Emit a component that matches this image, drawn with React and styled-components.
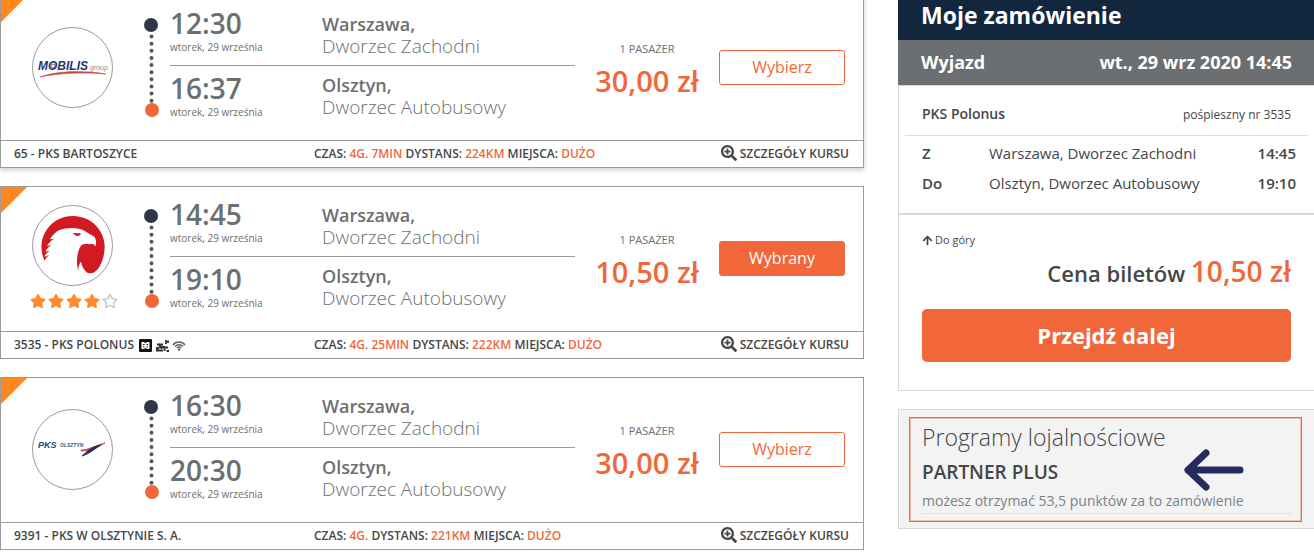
import React, { useState } from 'react';
import styled, { createGlobalStyle, ThemeProvider } from 'styled-components';
import { FaArrowUp, FaRegStar, FaSearchPlus, FaStar } from 'react-icons/fa';

const theme = {
  orange: '#f26739',
  corner: '#ff871f',
  star: '#ff8a2b',
  navy: '#12273e',
  grey: '#6b6f71',
  dark: '#444648',
  border: '#999b9c',
  lightBorder: '#d8d8d8',
};

const courses = [
  {
    id: '65',
    carrier: 'PKS BARTOSZYCE',
    logo: MobilisLogo,
    departure: '12:30',
    arrival: '16:37',
    price: '30,00 zł',
    time: '4G. 7MIN',
    distance: '224KM',
    raised: true,
  },
  {
    id: '3535',
    carrier: 'PKS POLONUS',
    logo: PolonusLogo,
    rating: 4,
    amenities: true,
    departure: '14:45',
    arrival: '19:10',
    price: '10,50 zł',
    time: '4G. 25MIN',
    distance: '222KM',
  },
  {
    id: '9391',
    carrier: 'PKS W OLSZTYNIE S. A.',
    logo: OlsztynLogo,
    departure: '16:30',
    arrival: '20:30',
    price: '30,00 zł',
    time: '4G.',
    distance: '221KM',
  },
];

function MobilisLogo() {
  return (
    <svg width="79" height="79" viewBox="1 1 79 79" role="img" aria-label="Mobilis group">
      <text x="6" y="43" fontFamily="Liberation Sans, sans-serif" fontSize="12" fontWeight="bold" fontStyle="italic" fill="#23386e">MOBILIS</text>
      <circle cx="21" cy="39" r="2" fill="none" stroke="#b03a55" strokeWidth="1" />
      <text x="58" y="43" fontFamily="Liberation Sans, sans-serif" fontSize="7" fontStyle="italic" fill="#8b8fa3">group</text>
      <path d="M8 50C25 44 50 43 74 47C50 45 28 46 8 50Z" fill="#c4473f" stroke="#c4574f" strokeWidth=".6" />
    </svg>
  );
}

function PolonusLogo() {
  return (
    <svg width="79" height="79" viewBox="3 3 237 237" role="img" aria-label="Polonus">
      <path
        fill="#d21a22"
        d="M38 168C25 142 25 110 38 85C55 50 88 33 123 33C176 33 218 75 218 125C218 162 200 205 175 205C163 205 152 192 147 170C140 178 139 188 139 197C132 175 134 145 145 125C152 113 166 119 180 117C186 117 189 121 190 125C194 112 192 98 184 93C170 86 160 77 145 72C122 66 100 69 82 75C72 80 61 90 54 103L66 101C57 107 50 114 45 123L58 120C50 126 44 132 40 140L53 137C46 142 40 148 37 155L52 150C45 155 40 161 38 168Z"
      />
      <path fill="#d21a22" d="M121 84L147 85C145 92 139 95 132 92Z" />
    </svg>
  );
}

function OlsztynLogo() {
  return (
    <svg width="79" height="79" viewBox="1 1 79 79" role="img" aria-label="PKS Olsztyn">
      <text x="6" y="39" fontFamily="Liberation Sans, sans-serif" fontSize="9" fontWeight="bold" fontStyle="italic" fill="#174a78">PKS</text>
      <text x="28" y="38" fontFamily="Liberation Sans, sans-serif" fontSize="5" fontWeight="bold" fontStyle="italic" fill="#315b85">OLSZTYN</text>
      <path d="M49 41C57 41 64 36 73 34C65 38 60 42 49 42Z" fill="#c8564f" stroke="#c8564f" />
      <path d="M50 47C55 43 58 38 69 36C62 40 59 44 50 47Z" fill="#252f60" stroke="#252f60" />
    </svg>
  );
}

function RouteLine() {
  return (
    <svg width="16" height="100" aria-hidden="true">
      <path d="M8.500 19.500V85" stroke="#555" strokeWidth="4" strokeLinecap="round" strokeDasharray="0 7.130" />
      <circle cx="8" cy="8" r="7" fill="#30364a" />
      <circle cx="9" cy="93" r="7" fill="#f26739" />
    </svg>
  );
}

function Amenities() {
  return (
    <AmenityList>
      <svg width="13" height="13" role="img" aria-label="Gniazdko">
        <rect width="13" height="13" rx="1" fill="#111" />
        <path d="M2.500 3H5L6.500 4.200L8 3H10.500V10H8L6.500 9L5 10H2.500Z" fill="#fff" />
        <path d="M4 5H5.500V6H4ZM7.500 5H9V6H7.500ZM4 7.500H5.500V8.500H4ZM7.500 7.500H9V8.500H7.500Z" fill="#111" />
      </svg>
      <svg width="14" height="13" role="img" aria-label="Wygodne fotele">
        <path d="M2 5.500H8M1 11.500H8M4 8H10M11 1V5M13 1.500V4M13 8.500H9.500V12M11.500 12H14" fill="none" stroke="#333" strokeWidth="1.800" />
        <path d="M4 5L7 10" stroke="#333" strokeWidth="2" />
        <circle cx="2.500" cy="9.500" r="1.800" fill="#333" />
      </svg>
      <svg width="14" height="13" role="img" aria-label="Wi-Fi">
        <path d="M1 6C4 2 10 2 13 6M3 7.500C5 5 9 5 11 7.500M5 9C6 7.800 8 7.800 9 9" fill="none" stroke="#666" strokeWidth="1.500" />
        <circle cx="7" cy="10.500" r="1.200" fill="#666" />
      </svg>
    </AmenityList>
  );
}

function Course({ course, selected, onSelect }) {
  const Logo = course.logo;

  return (
    <Card $raised={course.raised}>
      <CardBody>
        <Carrier>
          <LogoCircle><Logo /></LogoCircle>
          {
            course.rating ?
              <Rating role="img" aria-label={`Ocena ${course.rating} na 5`}>
                {[1, 2, 3, 4, 5].map(n => (
                  n <= course.rating ? <FaStar key={n} /> : <FaRegStar key={n} color="#c4c4c4" />
                ))}
              </Rating> : null
          }
        </Carrier>
        <RouteLine />
        <Itinerary>
          <Stop>
            <div>
              <Time>{course.departure}</Time>
              <StopDate>wtorek, 29 września</StopDate>
            </div>
            <Station><b>Warszawa,</b>Dworzec Zachodni</Station>
          </Stop>
          <Stop>
            <div>
              <Time>{course.arrival}</Time>
              <StopDate>wtorek, 29 września</StopDate>
            </div>
            <Station><b>Olsztyn,</b>Dworzec Autobusowy</Station>
          </Stop>
        </Itinerary>
        <Fare>
          <Passengers>1 PASAŻER</Passengers>
          <Price>{course.price}</Price>
        </Fare>
        <SelectButton type="button" $selected={selected} onClick={() => onSelect(course.id)}>
          {selected ? 'Wybrany' : 'Wybierz'}
        </SelectButton>
      </CardBody>
      <CardFooter>
        <Line>{course.id} - {course.carrier}{course.amenities ? <Amenities /> : null}</Line>
        <span>
          CZAS: <em>{course.time}</em> DYSTANS: <em>{course.distance}</em> MIEJSCA: <em>DUŻO</em>
        </span>
        <Details href="#"><FaSearchPlus size={16} />SZCZEGÓŁY KURSU</Details>
      </CardFooter>
    </Card>
  );
}

function App() {
  const [selectedId, setSelectedId] = useState('3535');

  return (
    <ThemeProvider theme={theme}>
      <GlobalStyle />
      <Page>
        <Results>
          {courses.map(course => (
            <Course
              key={course.id}
              course={course}
              selected={course.id === selectedId}
              onSelect={setSelectedId}
            />
          ))}
        </Results>
        <Sidebar>
          <SidebarTitle>Moje zamówienie</SidebarTitle>
          <Departure><span>Wyjazd</span><span>wt., 29 wrz 2020 14:45</span></Departure>
          <OrderBox>
            <OrderCarrier><b>PKS Polonus</b><small>pośpieszny nr 3535</small></OrderCarrier>
            <StopsTable>
              <tbody>
                <tr><th scope="row">Z</th><td>Warszawa, Dworzec Zachodni</td><td>14:45</td></tr>
                <tr><th scope="row">Do</th><td>Olsztyn, Dworzec Autobusowy</td><td>19:10</td></tr>
              </tbody>
            </StopsTable>
          </OrderBox>
          <Summary>
            <TopLink href="#"><FaArrowUp size={11} />Do góry</TopLink>
            <Total>Cena biletów <strong>10,50 zł</strong></Total>
            <NextButton type="button">Przejdź dalej</NextButton>
          </Summary>
          <Loyalty>
            <LoyaltyFrame>
              <LoyaltyContent>
                <LoyaltyTitle>Programy lojalnościowe</LoyaltyTitle>
                <ProgramName>PARTNER PLUS</ProgramName>
                <Points>możesz otrzymać 53,5 punktów za to zamówienie</Points>
                <Pointer width="60" height="42" aria-hidden="true">
                  <path d="M4 21H56M22 4L4 21L22 38" fill="none" stroke="#262b5f" strokeWidth="7" strokeLinecap="round" strokeLinejoin="round" />
                </Pointer>
              </LoyaltyContent>
            </LoyaltyFrame>
          </Loyalty>
        </Sidebar>
      </Page>
    </ThemeProvider>
  );
}

const GlobalStyle = createGlobalStyle`
  * {
    box-sizing: border-box;
  }

  body {
    margin: 0;
    background-color: #fff;
    color: ${props => props.theme.dark};
    font-family: 'Open Sans', 'Noto Sans', sans-serif;
    font-size: 14px;
    overflow: hidden;
  }

  h2, h3, p {
    margin: 0;
  }

  button {
    font-family: inherit;
    cursor: pointer;
  }

  a {
    color: inherit;
    text-decoration: none;
  }
`;

const Page = styled.div`
  display: grid;
  grid-template-columns: 864fr 416fr;
  column-gap: 34px;
  align-items: start;
`;

const Results = styled.main`
  display: flex;
  flex-direction: column;
  gap: 18px;
  margin-top: -5px;
`;

const Card = styled.article`
  border: 1px solid ${props => props.theme.border};
  background: linear-gradient(135deg, ${props => props.theme.corner} 18px, #fff 19px);
  box-shadow: ${props => props.$raised ? '0 2px 5px rgba(0, 0, 0, 0.2)' : 'none'};
`;

const CardBody = styled.div`
  display: grid;
  grid-template-columns: 142px 27px 1fr 144px 126px;
  align-items: center;
  min-height: 144px;
  padding: 0 18px 2px 0;
`;

const Carrier = styled.div`
  display: flex;
  flex-direction: column;
  align-items: center;
`;

const LogoCircle = styled.div`
  width: 81px;
  height: 81px;
  border: 1px solid ${props => props.theme.border};
  border-radius: 50%;
  overflow: hidden;

  svg {
    display: block;
  }
`;

const Rating = styled.div`
  display: flex;
  gap: 2px;
  padding: 7px 0 2px 4px;
  color: ${props => props.theme.star};
  font-size: 16px;
`;

const Itinerary = styled.div`
  color: ${props => props.theme.grey};
`;

const Stop = styled.div`
  display: grid;
  grid-template-columns: 152px 1fr;
  align-items: end;
  height: 57px;
  padding-bottom: 8px;

  & + & {
    align-items: start;
    height: 61px;
    padding: 8px 0 0;
    border-top: 1px solid ${props => props.theme.border};
  }
`;

const Time = styled.div`
  font-size: 28px;
  font-weight: 600;
  line-height: 28px;
`;

const StopDate = styled.div`
  font-size: 10px;
  line-height: 20px;
`;

const Station = styled.div`
  font-size: 19px;
  font-weight: 300;
  line-height: 22px;

  b {
    display: block;
    font-size: 18px;
    font-weight: 600;
  }
`;

const Fare = styled.div`
  padding-top: 5px;
  text-align: center;
`;

const Passengers = styled.div`
  color: ${props => props.theme.grey};
  font-size: 11px;
  line-height: 22px;
`;

const Price = styled.div`
  color: ${props => props.theme.orange};
  font-size: 29px;
  font-weight: 600;
  line-height: 42px;
`;

const SelectButton = styled.button`
  height: 35px;
  padding: 0;
  border: 1px solid ${props => props.theme.orange};
  border-radius: 3px;
  background-color: ${props => props.$selected ? props.theme.orange : '#fff'};
  color: ${props => props.$selected ? '#fff' : props.theme.orange};
  font-size: 16px;
`;

const CardFooter = styled.footer`
  display: grid;
  grid-template-columns: 300px 1fr auto;
  align-items: center;
  height: 27px;
  padding: 0 14px 2px 13px;
  border-top: 1px solid ${props => props.theme.border};
  background-color: #fff;
  font-size: 12px;
  font-weight: 600;

  em {
    color: ${props => props.theme.orange};
    font-style: normal;
  }
`;

const Line = styled.span`
  display: flex;
  align-items: center;
`;

const AmenityList = styled.span`
  display: flex;
  gap: 3px;
  margin-left: 5px;
  padding-top: 2px;
`;

const Details = styled.a`
  display: flex;
  align-items: center;
  gap: 3px;
`;

const Sidebar = styled.aside`
  min-width: 0;
`;

const SidebarTitle = styled.h2`
  height: 40px;
  padding: 0 23px;
  background-color: ${props => props.theme.navy};
  color: #fff;
  font-size: 23px;
  font-weight: 700;
  line-height: 31px;
`;

const Departure = styled.div`
  display: flex;
  justify-content: space-between;
  padding: 0 22px 0 23px;
  background-color: ${props => props.theme.grey};
  color: #fff;
  font-size: 18px;
  font-weight: 700;
  line-height: 45px;
`;

const OrderBox = styled.section`
  padding: 0 6px;
  border: solid ${props => props.theme.lightBorder};
  border-width: 1px 0 1px 1px;
`;

const OrderCarrier = styled.div`
  display: flex;
  align-items: baseline;
  justify-content: space-between;
  padding: 8px 17px 0;
  border-bottom: 1px solid #dcdce4;
  line-height: 40px;

  b {
    font-weight: 600;
  }

  small {
    font-size: 12px;
  }
`;

const StopsTable = styled.table`
  width: 100%;
  padding: 3px 12px 14px 17px;
  border-spacing: 0;
  font-size: 15px;

  th, td {
    height: 30px;
    padding: 0 0 2px;
    text-align: left;
    font-weight: 400;
  }

  th {
    width: 67px;
    font-weight: 600;
  }

  td:last-child {
    text-align: right;
    font-weight: 600;
  }
`;

const Summary = styled.section`
  display: flex;
  flex-direction: column;
  padding: 15px 23px 28px;
  border: solid ${props => props.theme.lightBorder};
  border-width: 1px 0 1px 1px;
`;

const TopLink = styled.a`
  display: flex;
  align-items: center;
  gap: 2px;
  align-self: flex-start;
  font-size: 11px;
  line-height: 20px;
`;

const Total = styled.div`
  padding-bottom: 15px;
  text-align: right;
  font-size: 22px;
  font-weight: 600;
  line-height: 42px;

  strong {
    color: ${props => props.theme.orange};
    font-size: 28px;
    font-weight: 600;
  }
`;

const NextButton = styled.button`
  height: 53px;
  padding: 0 0 2px;
  border: none;
  border-radius: 5px;
  background-color: ${props => props.theme.orange};
  color: #fff;
  font-size: 22px;
  font-weight: 700;
`;

const Loyalty = styled.section`
  margin-top: 18px;
  padding: 7px 12px 6px 10px;
  border: solid ${props => props.theme.lightBorder};
  border-width: 1px 0 1px 1px;
  background-color: #f3f3f3;
`;

const LoyaltyFrame = styled.div`
  padding: 0 10px 7px 12px;
  border: 1px solid ${props => props.theme.orange};
  box-shadow: inset 0 0 0 1px rgba(242, 103, 57, 0.4);
`;

const LoyaltyContent = styled.div`
  position: relative;
  border-bottom: 1px solid #e0e0e0;
`;

const LoyaltyTitle = styled.h3`
  font-size: 23px;
  font-weight: 300;
  line-height: 38px;
`;

const ProgramName = styled.p`
  font-size: 19px;
  font-weight: 600;
  line-height: 33px;
`;

const Points = styled.p`
  color: #7a8288;
  font-size: 14px;
  line-height: 24px;
`;

/* the arrow lies over the text of the frame */
const Pointer = styled.svg`
  position: absolute;
  top: 31px;
  right: 47px;
`;

export default App;
